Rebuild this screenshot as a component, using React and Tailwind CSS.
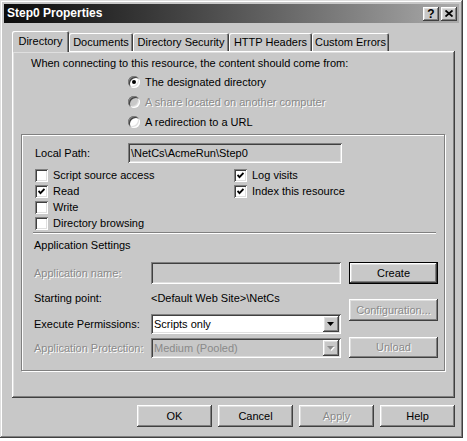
import React from 'react';

const raised = 'shadow-[inset_-1px_-1px_0_#404040,inset_1px_1px_0_#fff,inset_-2px_-2px_0_#808080,inset_2px_2px_0_#dfdfdf]';
const sunken = 'shadow-[inset_1px_1px_0_#808080,inset_-1px_-1px_0_#fff,inset_2px_2px_0_#404040,inset_-2px_-2px_0_#dfdfdf]';
const dis = 'text-[#8a8a8a] [text-shadow:1px_1px_0_#fff]';

function Btn({ children, disabled, def, className = '' }) {
    return (
        <div className={`flex items-center justify-center bg-[#c8c8c8] ${raised} ${def ? 'border border-black' : ''} ${className}`}>
            <span className={disabled ? dis : 'text-black'}>{children}</span>
        </div>
    );
}

function Radio({ checked, disabled, children }) {
    return (
        <div className="flex items-center h-[20px] gap-[5px]">
            <div className={`w-[12px] h-[12px] rounded-full flex items-center justify-center ${disabled ? 'bg-[#c8c8c8]' : 'bg-white'} ${sunken}`}>
                {checked && <div className="w-[4px] h-[4px] rounded-full bg-black" />}
            </div>
            <span className={disabled ? dis : ''}>{children}</span>
        </div>
    );
}

function Check({ checked, children }) {
    return (
        <div className="flex items-center h-[16px] gap-[5px]">
            <div className={`w-[13px] h-[13px] bg-white flex items-center justify-center ${sunken}`}>
                {checked && (
                    <svg width="7" height="7" viewBox="0 0 7 7">
                        <polyline points="0.5,3 2.5,5.2 6.5,1" fill="none" stroke="#000" strokeWidth="1.9" />
                    </svg>
                )}
            </div>
            <span>{children}</span>
        </div>
    );
}

function Combo({ value, disabled }) {
    return (
        <div className={`w-[190px] h-[20px] flex items-center p-[2px] ${sunken} ${disabled ? 'bg-[#c8c8c8]' : 'bg-white'}`}>
            <span className={`flex-1 pl-[1px] ${disabled ? 'text-[#8a8a8a]' : ''}`}>{value}</span>
            <div className={`w-[16px] h-[16px] flex items-center justify-center bg-[#c8c8c8] ${raised}`}>
                <svg width="8" height="5" viewBox="0 0 8 5">
                    {disabled && <polygon points="1,1 8,1 4.5,5" fill="#fff" />}
                    <polygon points="0,0 7,0 3.5,4" fill={disabled ? '#8a8a8a' : '#000'} />
                </svg>
            </div>
        </div>
    );
}

const tabs = [
    { label: 'Directory', w: 'w-[57px] h-[21px] -mb-px relative z-10', active: true },
    { label: 'Documents', w: 'w-[64px] h-[18px]' },
    { label: 'Directory Security', w: 'w-[96px] h-[18px]' },
    { label: 'HTTP Headers', w: 'w-[83px] h-[18px]' },
    { label: 'Custom Errors', w: 'w-[77px] h-[18px]' },
];

export default function App() {
    return (
        <div className="w-[467px] h-[441px] bg-white font-['Liberation_Sans',Arial,sans-serif] text-[11px] leading-[13px] text-black">
            <div className="w-[463px] h-[438px] bg-[#c8c8c8] p-[4px] flex flex-col shadow-[inset_-1px_-1px_0_#404040,inset_1px_1px_0_#dfdfdf,inset_-2px_-2px_0_#808080,inset_2px_2px_0_#fff]">
                {/* Title bar */}
                <div className="h-[19px] flex items-center justify-between bg-linear-to-r from-[#0c0c0c] to-[#ababab] pl-[3px] pr-[2px]">
                    <span className="text-white font-bold text-[12px]">Step0 Properties</span>
                    <div className="flex gap-[2px]">
                        <div className={`w-[16px] h-[14px] flex items-center justify-center bg-[#c8c8c8] ${raised}`}>
                            <span className="font-bold text-[12px] leading-[12px]">?</span>
                        </div>
                        <div className={`w-[16px] h-[14px] flex items-center justify-center bg-[#c8c8c8] ${raised}`}>
                            <svg width="8" height="7" viewBox="0 0 8 7">
                                <path d="M0.5 0.5 L7.5 6.5 M7.5 0.5 L0.5 6.5" stroke="#000" strokeWidth="1.8" />
                            </svg>
                        </div>
                    </div>
                </div>

                {/* Tabs */}
                <div className="ml-[8px] mt-[8px] h-[20px] flex items-end">
                    {tabs.map((t) => (
                        <div
                            key={t.label}
                            className={`${t.w} flex items-center justify-center bg-[#c8c8c8] rounded-t-[2px] shadow-[inset_1px_1px_0_#fff,inset_-1px_0_0_#404040,inset_-2px_0_0_#808080]`}
                        >
                            {t.label}
                        </div>
                    ))}
                </div>

                {/* Tab panel */}
                <div className="ml-[8px] w-[443px] h-[347px] flex flex-col shadow-[inset_-1px_-1px_0_#404040,inset_1px_1px_0_#fff,inset_-2px_-2px_0_#808080,inset_2px_2px_0_#dfdfdf]">
                    <div className="mt-[6px] pl-[19px]">When connecting to this resource, the content should come from:</div>
                    <div className="mt-[2px] pl-[116px] flex flex-col">
                        <Radio checked>The designated directory</Radio>
                        <Radio disabled>A share located on another computer</Radio>
                        <Radio>A redirection to a URL</Radio>
                    </div>

                    {/* Group */}
                    <div className="ml-[9px] mt-[2px] w-[424px] h-[237px] border border-[#808080] shadow-[inset_1px_1px_0_#fff,1px_1px_0_#fff] flex flex-col">
                        <div className="mt-[8px] pl-[13px] h-[20px] flex items-center">
                            <span className="w-[93px]">Local Path:</span>
                            <div className={`w-[214px] h-[20px] flex items-center pl-[3px] ${sunken}`}>\NetCs\AcmeRun\Step0</div>
                        </div>

                        <div className="mt-[4px] pl-[13px] flex">
                            <div className="w-[199px] flex flex-col">
                                <Check>Script source access</Check>
                                <Check checked>Read</Check>
                                <Check>Write</Check>
                                <Check>Directory browsing</Check>
                            </div>
                            <div className="flex flex-col">
                                <Check checked>Log visits</Check>
                                <Check checked>Index this resource</Check>
                            </div>
                        </div>

                        <div className="ml-[11px] mt-[1px] w-[403px] h-0 border-t border-b border-t-[#808080] border-b-white" />

                        <div className="mt-[5px] pl-[12px] h-[13px]">Application Settings</div>

                        <div className="mt-[10px] pl-[12px] flex gap-[8px]">
                            <div className="w-[307px] flex flex-col">
                                <div className="h-[22px] flex items-center">
                                    <span className={`w-[117px] ${dis}`}>Application name:</span>
                                    <div className={`w-[190px] h-[22px] ${sunken}`} />
                                </div>
                                <div className="mt-[4px] h-[20px] flex items-center">
                                    <span className="w-[117px]">Starting point:</span>
                                    <span>&lt;Default Web Site&gt;\NetCs</span>
                                </div>
                                <div className="mt-[6px] h-[20px] flex items-center">
                                    <span className="w-[117px]">Execute Permissions:</span>
                                    <Combo value="Scripts only" />
                                </div>
                                <div className="mt-[4px] h-[20px] flex items-center">
                                    <span className={`w-[117px] ${dis}`}>Application Protection:</span>
                                    <Combo value="Medium (Pooled)" disabled />
                                </div>
                            </div>
                            <div className="w-[89px] flex flex-col">
                                <Btn def className="h-[22px]">Create</Btn>
                                <Btn disabled className="mt-[15px] h-[22px]">Configuration...</Btn>
                                <Btn disabled className="mt-[16px] h-[21px]">Unload</Btn>
                            </div>
                        </div>
                    </div>
                </div>

                {/* Dialog buttons */}
                <div className="ml-[8px] mt-[7px] w-[443px] flex justify-end gap-[6px]">
                    <Btn className="w-[75px] h-[22px]">OK</Btn>
                    <Btn className="w-[75px] h-[22px]">Cancel</Btn>
                    <Btn disabled className="w-[75px] h-[22px]">Apply</Btn>
                    <Btn className="w-[75px] h-[22px]">Help</Btn>
                </div>
            </div>
        </div>
    );
}
